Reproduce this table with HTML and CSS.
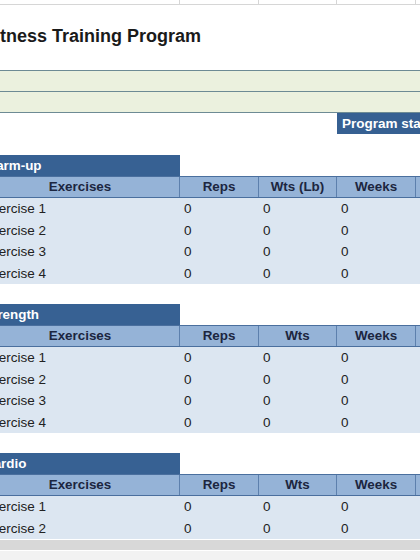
FILE: index.html
```html
<!DOCTYPE html>
<html>
<head>
<meta charset="utf-8">
<link rel="stylesheet" href="styles.css">
</head>
<body>
<div class="page">
  <div class="grid topstrip">
    <div class="tcell"></div><div class="tcell"></div><div class="tcell"></div><div class="tcell"></div><div class="tcell"></div>
  </div>
  <h1 class="title">Fitness Training Program</h1>
  <div class="band"></div>
  <div class="band band-last"></div>
  <div class="grid prog-row">
    <div class="prog">Program start</div>
  </div>

  <section class="block">
    <div class="grid">
      <div class="block-title">Warm-up</div>
    </div>
    <div class="grid head">
      <div class="hcell">Exercises</div><div class="hcell">Reps</div><div class="hcell">Wts (Lb)</div><div class="hcell">Weeks</div><div class="hcell"></div>
    </div>
    <div class="grid data"><div class="dcell name">Exercise 1</div><div class="dcell">0</div><div class="dcell">0</div><div class="dcell">0</div><div class="dcell"></div></div>
    <div class="grid data"><div class="dcell name">Exercise 2</div><div class="dcell">0</div><div class="dcell">0</div><div class="dcell">0</div><div class="dcell"></div></div>
    <div class="grid data"><div class="dcell name">Exercise 3</div><div class="dcell">0</div><div class="dcell">0</div><div class="dcell">0</div><div class="dcell"></div></div>
    <div class="grid data"><div class="dcell name">Exercise 4</div><div class="dcell">0</div><div class="dcell">0</div><div class="dcell">0</div><div class="dcell"></div></div>
  </section>

  <section class="block">
    <div class="grid">
      <div class="block-title">Strength</div>
    </div>
    <div class="grid head">
      <div class="hcell">Exercises</div><div class="hcell">Reps</div><div class="hcell">Wts</div><div class="hcell">Weeks</div><div class="hcell"></div>
    </div>
    <div class="grid data"><div class="dcell name">Exercise 1</div><div class="dcell">0</div><div class="dcell">0</div><div class="dcell">0</div><div class="dcell"></div></div>
    <div class="grid data"><div class="dcell name">Exercise 2</div><div class="dcell">0</div><div class="dcell">0</div><div class="dcell">0</div><div class="dcell"></div></div>
    <div class="grid data"><div class="dcell name">Exercise 3</div><div class="dcell">0</div><div class="dcell">0</div><div class="dcell">0</div><div class="dcell"></div></div>
    <div class="grid data"><div class="dcell name">Exercise 4</div><div class="dcell">0</div><div class="dcell">0</div><div class="dcell">0</div><div class="dcell"></div></div>
  </section>

  <section class="block">
    <div class="grid">
      <div class="block-title">Cardio</div>
    </div>
    <div class="grid head">
      <div class="hcell">Exercises</div><div class="hcell">Reps</div><div class="hcell">Wts</div><div class="hcell">Weeks</div><div class="hcell"></div>
    </div>
    <div class="grid data"><div class="dcell name">Exercise 1</div><div class="dcell">0</div><div class="dcell">0</div><div class="dcell">0</div><div class="dcell"></div></div>
    <div class="grid data"><div class="dcell name">Exercise 2</div><div class="dcell">0</div><div class="dcell">0</div><div class="dcell">0</div><div class="dcell"></div></div>
  </section>

  <div class="scrollbar"></div>
  <div class="scroll-foot"></div>
</div>
</body>
</html>
```

FILE: styles.css
```css
html, body {
  margin: 0;
  padding: 0;
  background: #ffffff;
  overflow: hidden;
  height: 560px;
}

body {
  font-family: "Liberation Sans", Arial, sans-serif;
  color: #1e1e1e;
}

.page {
  margin-left: -19px;
  width: 540px;
}

.grid {
  display: grid;
  grid-template-columns: 199px 79px 78px 79px 105px;
}

.topstrip {
  height: 4px;
  border-bottom: 1px solid #d6d6d6;
}

.tcell {
  border-right: 1px solid #d6d6d6;
}

.title {
  margin: 20px 0 23px 0;
  padding-left: 3px;
  font-size: 18px;
  line-height: 22px;
  font-weight: bold;
  color: #1a1a1a;
}

.band {
  height: 20px;
  background: #ebf1de;
  border-top: 1px solid #6d8b94;
}

.band-last {
  border-bottom: 1px solid #6d8b94;
}

.prog-row {
  height: 21px;
}

.prog {
  grid-column: 4 / 6;
  background: #366092;
  color: #ffffff;
  font-weight: bold;
  font-size: 13.5px;
  line-height: 21px;
  padding-left: 5px;
  white-space: nowrap;
}

.block {
  margin-top: 20px;
}

.prog-row + .block {
  margin-top: 21px;
}

.block-title {
  grid-column: 1 / 2;
  height: 21px;
  line-height: 22px;
  background: #376193;
  color: #ffffff;
  font-weight: bold;
  font-size: 13.4px;
  padding-left: 3px;
}

.head {
  height: 20px;
  background: #95b3d7;
  border-top: 1px solid #4a6f9e;
  border-bottom: 1px solid #4a6f9e;
}

.hcell {
  text-align: center;
  font-weight: bold;
  font-size: 13.4px;
  line-height: 20px;
  color: #1c2640;
  border-right: 1px solid #5d80ad;
  white-space: nowrap;
}

.data {
  height: 21.5px;
  background: #dce6f1;
}

.dcell {
  font-size: 13.5px;
  line-height: 21.5px;
  padding-left: 4px;
  color: #222222;
  white-space: nowrap;
}

.dcell.name {
  padding-left: 2px;
}

.scrollbar {
  margin-top: 1px;
  height: 10px;
  background: #d8d8d8;
}

.scroll-foot {
  margin-top: 1px;
  height: 10px;
  background: #f2f2f2;
}
```
